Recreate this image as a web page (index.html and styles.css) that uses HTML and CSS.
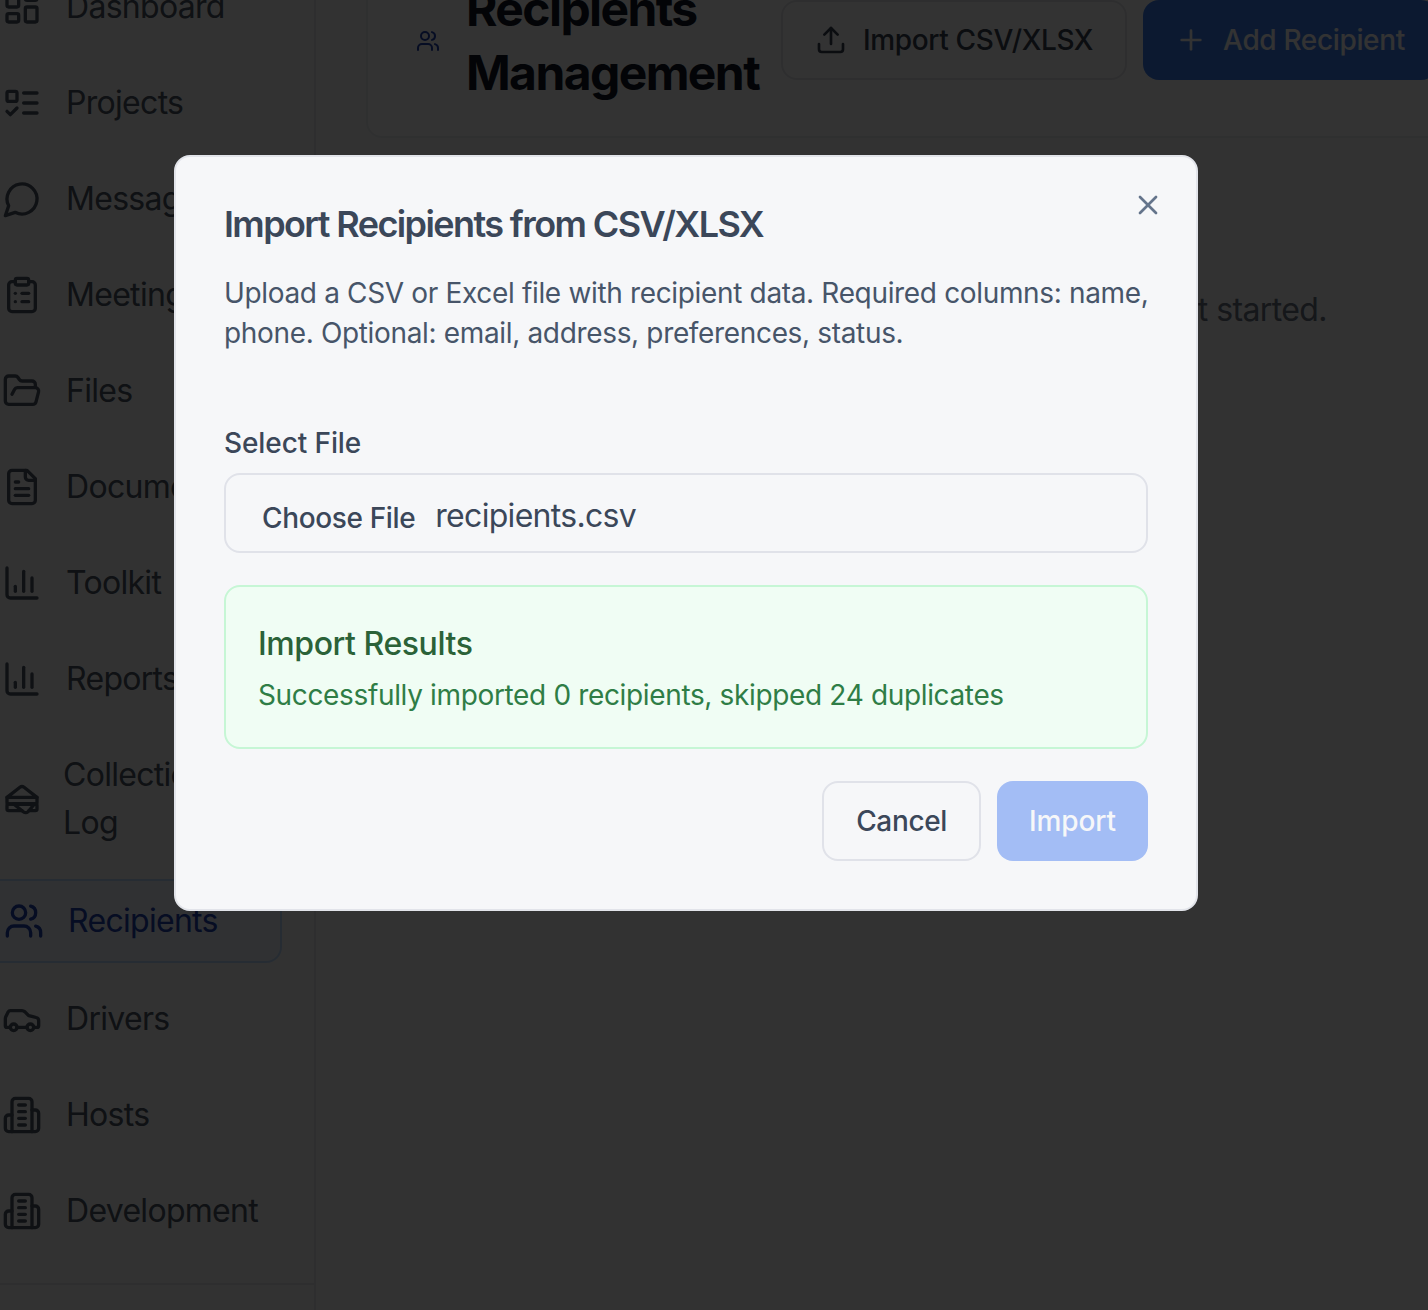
FILE: index.html
```html
<!DOCTYPE html>
<html lang="en">
<head>
  <meta charset="UTF-8">
  <meta name="viewport" content="width=device-width, initial-scale=1.0">
  <title>Recipients Management</title>
  <link rel="stylesheet" href="styles.css">
</head>
<body>
  <svg class="sprites" aria-hidden="true">
    <symbol id="i-dashboard" viewBox="0 0 24 24"><rect x="3" y="3" width="7" height="9" rx="1"/><rect x="14" y="3" width="7" height="5" rx="1"/><rect x="14" y="12" width="7" height="9" rx="1"/><rect x="3" y="16" width="7" height="5" rx="1"/></symbol>
    <symbol id="i-projects" viewBox="0 0 24 24"><rect x="3" y="5" width="6" height="6" rx="1"/><path d="m3 17 2 2 4-4"/><path d="M13 6h8"/><path d="M13 12h8"/><path d="M13 18h8"/></symbol>
    <symbol id="i-messages" viewBox="0 0 24 24"><path d="M7.9 20A9 9 0 1 0 4 16.1L2 22Z"/></symbol>
    <symbol id="i-meetings" viewBox="0 0 24 24"><rect x="8" y="2" width="8" height="4" rx="1"/><path d="M16 4h2a2 2 0 0 1 2 2v14a2 2 0 0 1-2 2H6a2 2 0 0 1-2-2V6a2 2 0 0 1 2-2h2"/><path d="M12 11h4"/><path d="M12 16h4"/><path d="M8 11h.01"/><path d="M8 16h.01"/></symbol>
    <symbol id="i-files" viewBox="0 0 24 24"><path d="m6 14 1.5-2.9A2 2 0 0 1 9.24 10H20a2 2 0 0 1 1.94 2.5l-1.54 6a2 2 0 0 1-1.95 1.5H4a2 2 0 0 1-2-2V5a2 2 0 0 1 2-2h3.9a2 2 0 0 1 1.69.9l.81 1.2a2 2 0 0 0 1.67.9H18a2 2 0 0 1 2 2v2"/></symbol>
    <symbol id="i-documents" viewBox="0 0 24 24"><path d="M15 2H6a2 2 0 0 0-2 2v16a2 2 0 0 0 2 2h12a2 2 0 0 0 2-2V7Z"/><path d="M14 2v4a2 2 0 0 0 2 2h4"/><path d="M10 9H8"/><path d="M16 13H8"/><path d="M16 17H8"/></symbol>
    <symbol id="i-chart" viewBox="0 0 24 24"><path d="M3 3v16a2 2 0 0 0 2 2h16"/><path d="M18 17V9"/><path d="M13 17V5"/><path d="M8 17v-3"/></symbol>
    <symbol id="i-sandwich" viewBox="0 0 24 24"><path d="M3 11v3a1 1 0 0 0 1 1h16a1 1 0 0 0 1-1v-3"/><path d="M12 19H4a1 1 0 0 1-1-1v-2a1 1 0 0 1 1-1h16a1 1 0 0 1 1 1v2a1 1 0 0 1-1 1h-3.83"/><path d="m3 11 7.77-6.04a2 2 0 0 1 2.46 0L21 11H3Z"/><path d="M12.97 19.77 7 15h12.5l-3.75 4.5a2 2 0 0 1-2.78.27Z"/></symbol>
    <symbol id="i-users" viewBox="0 0 24 24"><path d="M16 21v-2a4 4 0 0 0-4-4H6a4 4 0 0 0-4 4v2"/><circle cx="9" cy="7" r="4"/><path d="M22 21v-2a4 4 0 0 0-3-3.87"/><path d="M16 3.13a4 4 0 0 1 0 7.75"/></symbol>
    <symbol id="i-car" viewBox="0 0 24 24"><path d="M19 17h2c.6 0 1-.4 1-1v-3c0-.9-.7-1.7-1.5-1.9C18.7 10.6 16 10 16 10s-1.3-1.4-2.2-2.3c-.5-.4-1.1-.7-1.8-.7H5c-.6 0-1.1.4-1.4.9l-1.4 2.9A3.7 3.7 0 0 0 2 12v4c0 .6.4 1 1 1h2"/><circle cx="7" cy="17" r="2"/><path d="M9 17h6"/><circle cx="17" cy="17" r="2"/></symbol>
    <symbol id="i-building" viewBox="0 0 24 24"><path d="M6 22V4a2 2 0 0 1 2-2h8a2 2 0 0 1 2 2v18Z"/><path d="M6 12H4a2 2 0 0 0-2 2v6a2 2 0 0 0 2 2h2"/><path d="M18 9h2a2 2 0 0 1 2 2v9a2 2 0 0 1-2 2h-2"/><path d="M10 6h4"/><path d="M10 10h4"/><path d="M10 14h4"/><path d="M10 18h4"/></symbol>
    <symbol id="i-upload" viewBox="0 0 24 24"><path d="M21 15v4a2 2 0 0 1-2 2H5a2 2 0 0 1-2-2v-4"/><path d="M17 8l-5-5-5 5"/><path d="M12 3v12"/></symbol>
    <symbol id="i-plus" viewBox="0 0 24 24"><path d="M5 12h14"/><path d="M12 5v14"/></symbol>
    <symbol id="i-x" viewBox="0 0 24 24"><path d="M18 6 6 18"/><path d="m6 6 12 12"/></symbol>
  </svg>

  <div class="app">
    <aside class="sidebar">
      <nav class="nav">
        <a class="nav-item"><svg class="nav-icon"><use href="#i-dashboard"/></svg><span>Dashboard</span></a>
        <a class="nav-item"><svg class="nav-icon"><use href="#i-projects"/></svg><span>Projects</span></a>
        <a class="nav-item"><svg class="nav-icon"><use href="#i-messages"/></svg><span>Messages</span></a>
        <a class="nav-item"><svg class="nav-icon"><use href="#i-meetings"/></svg><span>Meetings</span></a>
        <a class="nav-item"><svg class="nav-icon"><use href="#i-files"/></svg><span>Files</span></a>
        <a class="nav-item"><svg class="nav-icon"><use href="#i-documents"/></svg><span>Documents</span></a>
        <a class="nav-item"><svg class="nav-icon"><use href="#i-chart"/></svg><span>Toolkit</span></a>
        <a class="nav-item"><svg class="nav-icon"><use href="#i-chart"/></svg><span>Reports</span></a>
        <a class="nav-item nav-item-wrap"><svg class="nav-icon"><use href="#i-sandwich"/></svg><span>Collection<br>Log</span></a>
        <a class="nav-item nav-item-active"><svg class="nav-icon"><use href="#i-users"/></svg><span>Recipients</span></a>
        <a class="nav-item"><svg class="nav-icon"><use href="#i-car"/></svg><span>Drivers</span></a>
        <a class="nav-item"><svg class="nav-icon"><use href="#i-building"/></svg><span>Hosts</span></a>
        <a class="nav-item"><svg class="nav-icon"><use href="#i-building"/></svg><span>Development</span></a>
      </nav>
      <div class="sidebar-foot"></div>
    </aside>

    <main class="main">
      <section class="page-card">
        <div class="page-heading">
          <svg class="page-icon"><use href="#i-users"/></svg>
          <h1>Recipients Management</h1>
        </div>
        <button class="btn btn-outline"><svg class="btn-icon"><use href="#i-upload"/></svg>Import CSV/XLSX</button>
        <button class="btn btn-primary"><svg class="btn-icon"><use href="#i-plus"/></svg>Add Recipient</button>
      </section>
      <p class="empty">Add your first recipient to get started.</p>
    </main>
  </div>

  <div class="overlay">
    <div class="modal">
      <svg class="modal-close"><use href="#i-x"/></svg>
      <h2>Import Recipients from CSV/XLSX</h2>
      <p class="modal-desc">Upload a CSV or Excel file with recipient data. Required columns: name, phone. Optional: email, address, preferences, status.</p>

      <div class="field-label">Select File</div>
      <div class="file-input">
        <span class="file-btn">Choose File</span>
        <span class="file-name">recipients.csv</span>
      </div>

      <div class="results">
        <h3>Import Results</h3>
        <p>Successfully imported 0 recipients, skipped 24 duplicates</p>
      </div>

      <div class="modal-actions">
        <button class="btn btn-cancel">Cancel</button>
        <button class="btn btn-import">Import</button>
      </div>
    </div>
  </div>
</body>
</html>
```

FILE: styles.css
```css
html, body {
  height: 1310px; margin: 0; padding: 0;
  overflow: hidden;
  font-family: 'Inter', 'Liberation Sans', sans-serif;
  background: #f9fafb;
}
button { font-family: inherit; cursor: pointer; }
.sprites { display: none; }
svg {
  fill: none; stroke: currentColor; stroke-width: 2;
  stroke-linecap: round; stroke-linejoin: round;
}

/* page is scrolled down a bit in the shot */
.app {
  display: flex; height: 1410px;
  margin-top: -100px;
}

/* sidebar */
.sidebar {
  flex: 0 0 314px;
  border-right: 2px solid #e5e7eb;
  padding-top: 67px;
  overflow: hidden;
}
.nav {
  display: flex; flex-direction: column; gap: 16px;
  margin-left: -22px; width: 304px;
}
.nav-item {
  display: flex; align-items: center; gap: 24px;
  padding: 16px 24px;
  font-size: 32px; line-height: 48px;
  letter-spacing: -0.7px;
  color: #4b5563;
  white-space: nowrap;
}
.nav-icon { flex: 0 0 40px; width: 40px; height: 40px; }
.nav-item-wrap { gap: 21px; }
.nav-item-active {
  border: 2px solid #bfdbfe;
  border-radius: 16px;
  background: #eff6ff;
  color: #1e40af;
}
.sidebar-foot {
  margin-top: 32px;
  border-top: 2px solid #e5e7eb;
}

/* main */
.main {
  flex: 1; min-width: 0;
  padding: 43px 0 0 50px;
  overflow: hidden;
}
.page-card {
  display: flex; align-items: center; gap: 16px;
  width: max-content;
  padding: 32px 48px 31px;
  background: #fff;
  border: 2px solid #eceef1;
  border-radius: 16px;
}
.page-heading {
  flex: 0 0 349px;
  display: flex; align-items: center; gap: 26px;
}
.page-icon { flex: 0 0 24px; width: 24px; height: 24px; stroke-width: 2; color: #1e40af; }
.page-heading h1 {
  margin: 0;
  font-size: 48px; line-height: 64px; font-weight: 700;
  letter-spacing: -1.6px;
  color: #111827;
}
.btn {
  display: flex; align-items: center; gap: 16px;
  height: 80px; padding: 0 32px;
  font-size: 28px; font-weight: 500;
  letter-spacing: -0.35px;
  border-radius: 16px;
  white-space: nowrap;
}
.page-card .btn { margin-bottom: 2px; }
.btn-icon { width: 32px; height: 32px; }
.btn-outline { background: #fff; border: 2px solid #e5e7eb; color: #374151; }
.btn-primary { background: #3f7ff0; border: none; color: #fff; }
.empty {
  margin: 148px 0 0;
  padding-right: 101px;
  font-size: 32px; line-height: 48px;
  letter-spacing: -0.6px;
  text-align: right;
  color: #6b7280;
}

/* dialog */
.overlay {
  position: fixed; top: 0; left: 0; width: 100%; height: 100%;
  background: rgba(0,0,0,0.8);
  display: flex; align-items: flex-start;
  padding: 155px 0 0 174px; box-sizing: border-box;
}
.modal {
  position: relative;
  width: 1024px; box-sizing: border-box;
  padding: 48px;
  background: #f6f7f9;
  border: 2px solid #e2e4ea;
  border-radius: 16px;
}
.modal-close {
  position: absolute; top: 32px; right: 32px;
  width: 32px; height: 32px; color: #64748b;
}
.modal h2 {
  margin: 0;
  font-size: 36px; line-height: 38px; font-weight: 600;
  letter-spacing: -1.6px;
  color: #3b4759;
}
.modal-desc {
  margin: 30px -6px 0 0;
  font-size: 28px; line-height: 40px;
  letter-spacing: -0.34px;
  color: #475569;
}
.field-label {
  margin-top: 70px;
  font-size: 28px; line-height: 40px; font-weight: 500;
  letter-spacing: -0.1px;
  color: #3b4759;
}
.file-input {
  display: flex; align-items: center; gap: 20px;
  height: 80px; box-sizing: border-box;
  margin-top: 10px;
  padding: 0 24px 0 36px;
  border: 2px solid #e0e2e9;
  border-radius: 16px;
}
.file-btn { font-size: 28px; font-weight: 500; letter-spacing: -0.36px; color: #3b4759; padding-top: 10px; }
.file-name { font-size: 32px; letter-spacing: -0.7px; color: #3b4759; padding-top: 4px; }
.results {
  margin-top: 32px;
  padding: 32px;
  background: #f0fdf4;
  border: 2px solid #c6f6d5;
  border-radius: 16px;
}
.results h3 {
  margin: 0 0 8px;
  font-size: 32px; line-height: 50px; font-weight: 500;
  letter-spacing: -0.43px;
  color: #2b6238;
}
.results p {
  margin: -2px 0 0;
  font-size: 28px; line-height: 40px;
  letter-spacing: -0.35px;
  color: #2f7d46;
}
.modal-actions {
  display: flex; justify-content: flex-end; gap: 16px;
  margin-top: 32px;
}
.btn-cancel { background: transparent; border: 2px solid #e0e2e9; color: #3b4759; }
.btn-import { background: #a3bdf5; border: none; color: #f6f7f9; letter-spacing: -0.1px; }
```
